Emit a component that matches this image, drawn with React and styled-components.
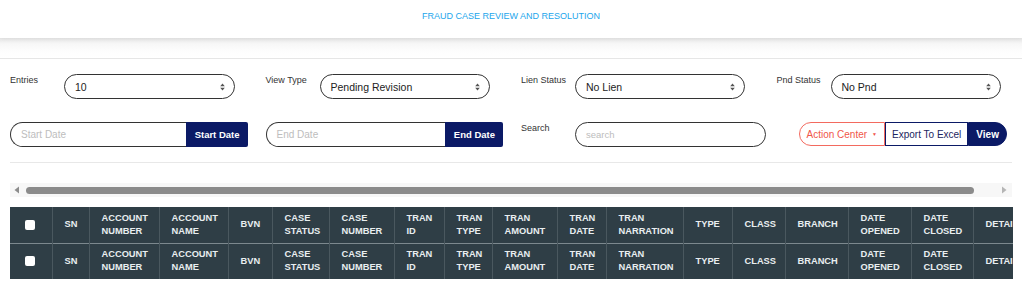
import React from "react";
import styled, { createGlobalStyle } from "styled-components";

const GlobalStyle = createGlobalStyle`
  html, body {
    margin: 0;
    padding: 0;
    background: #ffffff;
    font-family: "Liberation Sans", Arial, sans-serif;
  }
  * { box-sizing: border-box; }
`;

const navy = "#0b1a66";

const Page = styled.div`
  width: 1022px;
  height: 300px;
  overflow: hidden;
  background: #fff;
`;

const Header = styled.div`
  height: 38px;
  background: #fff;
  box-shadow: 0 1px 4px rgba(0, 0, 0, 0.06);
  display: flex;
  justify-content: center;
  padding-top: 11px;
  position: relative;
  z-index: 1;
`;

const Title = styled.div`
  font-size: 9px;
  line-height: 11px;
  color: #22a6ec;
  text-transform: uppercase;
`;

const Band = styled.div`
  height: 21px;
  background: linear-gradient(#e7e7e7 0px, #f7f7f7 6px, #fdfdfd 13px, #ffffff 20px);
  border-bottom: 1px solid #e6e6e6;
`;

const Filters = styled.div`
  display: grid;
  grid-template-columns: repeat(4, minmax(0, 1fr));
  row-gap: 23px;
  padding-top: 15px;
`;

const Col = styled.div`
  display: flex;
  align-items: flex-start;
  padding: 0 8px 0 10px;
  min-width: 0;
`;

const Label = styled.div`
  width: 54px;
  flex: none;
  font-size: 9px;
  line-height: 11px;
  color: #333;
  padding-top: 1px;
  white-space: nowrap;
`;

const Select = styled.div`
  width: ${(p) => p.$w || 171}px;
  flex: none;
  height: 25px;
  border: 1px solid #333;
  border-radius: 13px;
  display: flex;
  align-items: center;
  justify-content: space-between;
  padding: 0 9px 0 10px;
  font-size: 10.5px;
  color: #222;
  white-space: nowrap;
`;

const Placeholder = styled.span`
  color: #bdbdbd;
  font-size: ${(p) => p.$size || 10}px;
`;

const Arrows = () => (
  <svg width="5" height="8" viewBox="0 0 5 8">
    <path d="M2.5 0.5 L4.8 3.3 H0.2 Z M2.5 7.5 L4.8 4.7 H0.2 Z" fill="#555" />
  </svg>
);

const InputGroup = styled.div`
  display: flex;
  width: 100%;
  height: 25px;
`;

const DateInput = styled.div`
  flex: 1;
  border: 1px solid #333;
  border-right: none;
  border-radius: 13px 0 0 13px;
  display: flex;
  align-items: center;
  padding-left: 10px;
`;

const DateButton = styled.div`
  flex: none;
  background: ${navy};
  color: #fff;
  font-weight: bold;
  font-size: 9.5px;
  display: flex;
  align-items: center;
  padding: 0 8px 0 9px;
  border-radius: 0 2px 2px 0;
  white-space: nowrap;
`;

const Actions = styled.div`
  display: flex;
  height: 24px;
  margin-left: 22px;
  white-space: nowrap;
`;

const ActionBtn = styled.div`
  display: flex;
  align-items: center;
  flex: none;
  font-size: 10px;
  padding: 0 ${(p) => p.$pad || 8}px;
  border: 1px solid ${(p) => p.$border};
  background: ${(p) => p.$bg || "#fff"};
  color: ${(p) => p.$color};
  font-weight: ${(p) => (p.$bold ? "bold" : "normal")};
  border-radius: ${(p) => p.$radius || "0"};
`;

const Caret = styled.span`
  font-size: 5px;
  margin-left: 5px;
  color: #f0564a;
`;

const Divider = styled.div`
  margin: 15px 10px 0 10px;
  border-top: 1px solid #e8e8e8;
`;

const ScrollTrack = styled.div`
  margin: 20px 10px 0 10px;
  height: 14px;
  background: #f7f7f7;
  display: flex;
  align-items: center;
  padding: 0 5px 0 4px;
  gap: 6px;
`;

const Thumb = styled.div`
  width: 948px;
  height: 7px;
  border-radius: 4px;
  background: #8b8b8b;
`;

const Spacer = styled.div`
  flex: 1;
`;

const TableWrap = styled.div`
  margin: 10px 9px 0 10px;
  overflow: hidden;
`;

const Table = styled.table`
  border-collapse: collapse;
  table-layout: fixed;
  width: 1033px;
  background: #2f3e46;
`;

const Row = styled.tr`
  height: 36px;
  & + & td {
    border-top: 1px solid #7c888e;
  }
`;

const Cell = styled.td`
  border-left: 1px solid #4a585f;
  padding: 0 0 0 12px;
  font-size: 9.3px;
  line-height: 13px;
  font-weight: bold;
  color: #e9eef0;
  text-transform: uppercase;
  vertical-align: middle;
  white-space: nowrap;
  overflow: hidden;
  &:first-child {
    border-left: none;
    padding-left: 15px;
  }
`;

const Box = styled.span`
  display: block;
  width: 10px;
  height: 10px;
  background: #fff;
  border-radius: 2px;
`;

const columns = [
  { w: 42 },
  { w: 37, t: ["SN"] },
  { w: 70, t: ["Account", "Number"] },
  { w: 69, t: ["Account", "Name"] },
  { w: 44, t: ["BVN"] },
  { w: 57, t: ["Case", "Status"] },
  { w: 65, t: ["Case", "Number"] },
  { w: 50, t: ["Tran", "ID"] },
  { w: 48, t: ["Tran", "Type"] },
  { w: 65, t: ["Tran", "Amount"] },
  { w: 49, t: ["Tran", "Date"] },
  { w: 77, t: ["Tran", "Narration"] },
  { w: 49, t: ["Type"] },
  { w: 53, t: ["Class"] },
  { w: 63, t: ["Branch"] },
  { w: 63, t: ["Date", "Opened"] },
  { w: 62, t: ["Date", "Closed"] },
  { w: 70, t: ["Details"] },
];

const HeadRow = () => (
  <Row>
    {columns.map((c, i) => (
      <Cell key={i}>
        {c.t ? c.t.map((line, j) => <div key={j}>{line}</div>) : <Box />}
      </Cell>
    ))}
  </Row>
);

const App = () => (
  <Page>
    <GlobalStyle />
    <Header>
      <Title>Fraud Case Review and Resolution</Title>
    </Header>
    <Band />
    <Filters>
      <Col>
        <Label>Entries</Label>
        <Select>
          <span>10</span>
          <Arrows />
        </Select>
      </Col>
      <Col>
        <Label>View Type</Label>
        <Select $w={170}>
          <span>Pending Revision</span>
          <Arrows />
        </Select>
      </Col>
      <Col>
        <Label>Lien Status</Label>
        <Select $w={170}>
          <span>No Lien</span>
          <Arrows />
        </Select>
      </Col>
      <Col>
        <Label>Pnd Status</Label>
        <Select $w={170}>
          <span>No Pnd</span>
          <Arrows />
        </Select>
      </Col>

      <Col>
        <InputGroup>
          <DateInput>
            <Placeholder>Start Date</Placeholder>
          </DateInput>
          <DateButton>Start Date</DateButton>
        </InputGroup>
      </Col>
      <Col>
        <InputGroup>
          <DateInput>
            <Placeholder>End Date</Placeholder>
          </DateInput>
          <DateButton>End Date</DateButton>
        </InputGroup>
      </Col>
      <Col>
        <Label>Search</Label>
        <Select $w={191}>
          <Placeholder $size={9.5}>search</Placeholder>
        </Select>
      </Col>
      <Col>
        <Actions>
          <ActionBtn $border="#f36a5f" $color="#f0564a" $radius="13px 0 0 13px" $pad={7}>
            Action Center<Caret>▼</Caret>
          </ActionBtn>
          <ActionBtn $border={navy} $color="#1c2560" $pad={6}>
            Export To Excel
          </ActionBtn>
          <ActionBtn $border={navy} $bg={navy} $color="#fff" $bold $radius="0 13px 13px 0" $pad={7}>
            View
          </ActionBtn>
        </Actions>
      </Col>
    </Filters>
    <Divider />
    <ScrollTrack>
      <svg width="6" height="8" viewBox="0 0 6 8">
        <path d="M5 0.5 V7.5 L0.5 4 Z" fill="#8c8c8c" />
      </svg>
      <Thumb />
      <Spacer />
      <svg width="6" height="8" viewBox="0 0 6 8">
        <path d="M1 0.5 V7.5 L5.5 4 Z" fill="#b5b5b5" />
      </svg>
    </ScrollTrack>
    <TableWrap>
      <Table>
        <colgroup>
          {columns.map((c, i) => (
            <col key={i} style={{ width: c.w }} />
          ))}
        </colgroup>
        <tbody>
          <HeadRow />
          <HeadRow />
        </tbody>
      </Table>
    </TableWrap>
  </Page>
);

export default App;
